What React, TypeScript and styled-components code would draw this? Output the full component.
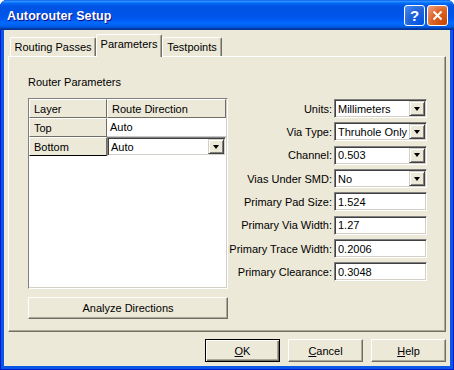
import React from "react"
import styled, { createGlobalStyle } from "styled-components"

const Color = {
  face: "#ECE9D8",
  light: "#FFFFFF",
  shadow: "#ACA899",
  dark: "#716F64",
  darkest: "#404040",
  frame: "#0A56E6",
}

const GlobalStyle = createGlobalStyle`
  html, body {
    margin: 0;
    padding: 0;
    background: #ffffff;
  }
  body {
    font-family: "Liberation Sans", Arial, sans-serif;
    font-size: 11px;
    color: #000;
  }
  * {
    box-sizing: border-box;
  }
`

let Window = styled.div`
  width: 454px;
  height: 370px;
  display: flex;
  flex-direction: column;
  background: ${Color.frame};
  box-shadow: inset 1px 0 #0019cf, inset -1px 0 #0019cf, inset 0 -1px #0019cf;
  border-radius: 7px 7px 0 0;
  overflow: hidden;
`

let TitleBar = styled.div`
  height: 30px;
  flex: none;
  display: flex;
  align-items: center;
  padding: 0 6px 0 7px;
  background: linear-gradient(
    to bottom,
    #0058ee 0%,
    #3593ff 4%,
    #288eff 6%,
    #127dff 8%,
    #036ffc 10%,
    #0262ee 14%,
    #0057e5 20%,
    #0054e3 24%,
    #0055eb 56%,
    #005bf5 66%,
    #026afe 76%,
    #0062ef 86%,
    #0052d6 92%,
    #0040ab 94%,
    #003092 100%
  );
`

let TitleText = styled.span`
  flex: 1;
  color: #fff;
  font-family: "Liberation Sans", Arial, sans-serif;
  font-weight: bold;
  font-size: 12.5px;
  letter-spacing: 0.1px;
  text-shadow: 1px 1px #0f1089;
  margin-top: 1px;
`

let CaptionButton = styled.div<{ $kind: "help" | "close" }>`
  width: 21px;
  height: 21px;
  margin-left: 2px;
  border: 1px solid #fff;
  border-radius: 3px;
  display: flex;
  align-items: center;
  justify-content: center;
  color: #fff;
  font-family: "Liberation Sans", Arial, sans-serif;
  font-weight: bold;
  font-size: 15px;
  background: ${(p) =>
    p.$kind === "help"
      ? "radial-gradient(circle at 90% 90%, #0054e9 0%, #2263d5 55%, #4d8ff9 100%)"
      : "radial-gradient(circle at 90% 90%, #cc4600 0%, #dc6527 55%, #f1a58a 100%)"};
`

let ClientArea = styled.div`
  flex: 1;
  margin: 0 4px 4px 4px;
  background: ${Color.face};
  padding: 4px;
  display: flex;
  flex-direction: column;
`

let TabStrip = styled.div`
  height: 22px;
  flex: none;
  display: flex;
  align-items: flex-end;
  padding-left: 2px;
  position: relative;
  z-index: 1;
`

let Tab = styled.div<{ $selected?: boolean; $width: number }>`
  width: ${(p) => p.$width}px;
  height: ${(p) => (p.$selected ? 23 : 19)}px;
  margin-bottom: ${(p) => (p.$selected ? -1 : 0)}px;
  background: ${Color.face};
  border-top: 1px solid ${Color.light};
  border-left: 1px solid ${Color.light};
  border-right: 1px solid ${Color.dark};
  box-shadow: inset -1px 0 ${Color.shadow};
  border-radius: 2px 2px 0 0;
  display: flex;
  justify-content: center;
  padding-top: 3px;
  white-space: nowrap;
`

let Panel = styled.div`
  height: 276px;
  flex: none;
  border: 1px solid;
  border-color: ${Color.light} ${Color.dark} ${Color.dark} ${Color.light};
  box-shadow: inset -1px -1px ${Color.shadow};
  padding: 18px 18px 0 19px;
  display: flex;
  flex-direction: column;
`

let GroupLabel = styled.div`
  height: 14px;
  line-height: 14px;
  margin-bottom: 9px;
`

let Columns = styled.div`
  display: flex;
`

let LeftColumn = styled.div`
  width: 200px;
  display: flex;
  flex-direction: column;
`

let RightColumn = styled.div`
  flex: 1;
  padding-top: 1px;
  display: flex;
  flex-direction: column;
  gap: 4.35px;
`

let Sunken = `
  border: 1px solid;
  border-color: #808080 #ffffff #ffffff #808080;
  box-shadow: inset 1px 1px ${Color.darkest}, inset -1px -1px #d4d0c8;
`

let Grid = styled.div`
  height: 191px;
  background: #fff;
  border: 1px solid;
  border-color: #808080 #ffffff #ffffff #808080;
  box-shadow: inset -1px -1px #d4d0c8;
  padding: 0 1px 1px 0;
  display: grid;
  grid-template-columns: 78px 1fr;
  grid-auto-rows: 19px;
  align-content: start;
`

let HeaderCell = styled.div<{ $strong?: boolean }>`
  background: ${Color.face};
  border-top: 1px solid ${Color.light};
  border-left: 1px solid ${Color.light};
  border-right: 1px solid ${Color.dark};
  border-bottom: 1px solid ${(p) => (p.$strong ? "#000" : Color.dark)};
  padding-left: 4px;
  display: flex;
  align-items: center;
  white-space: nowrap;
`

let DataCell = styled.div`
  background: #fff;
  border-bottom: 1px solid #c8c8c8;
  padding-left: 3px;
  display: flex;
  align-items: center;
`

let Field = styled.div<{ $width?: number }>`
  width: ${(p) => (p.$width ? `${p.$width}px` : "100%")};
  height: 19px;
  background: #fff;
  ${Sunken}
  padding-left: 3px;
  display: flex;
  align-items: center;
  white-space: nowrap;
  overflow: hidden;
`

let FieldText = styled.span`
  flex: 1;
`

let ArrowButton = styled.div`
  width: 16px;
  height: 15px;
  margin-right: 1px;
  flex: none;
  background: ${Color.face};
  border: 1px solid;
  border-color: #d4d0c8 ${Color.darkest} ${Color.darkest} #d4d0c8;
  box-shadow: inset 1px 1px #fff, inset -1px -1px #808080;
  display: flex;
  align-items: center;
  justify-content: center;

  &::after {
    content: "";
    width: 0;
    height: 0;
    border-left: 3.5px solid transparent;
    border-right: 3.5px solid transparent;
    border-top: 4px solid #000;
  }
`

let FormRow = styled.div`
  height: 19px;
  display: flex;
  align-items: center;
  justify-content: flex-end;
`

let FormLabel = styled.span`
  padding-right: 2px;
  white-space: nowrap;
`

let Button = styled.div<{ $default?: boolean; $width?: number }>`
  width: ${(p) => (p.$width ? `${p.$width}px` : "75px")};
  height: 23px;
  background: ${Color.face};
  border: 1px solid;
  border-color: ${(p) =>
    p.$default ? "#000" : `${Color.light} ${Color.dark} ${Color.dark} ${Color.light}`};
  box-shadow: ${(p) =>
    p.$default
      ? `inset 1px 1px ${Color.light}, inset -1px -1px ${Color.dark}, inset -2px -2px ${Color.shadow}`
      : `inset -1px -1px ${Color.shadow}`};
  display: flex;
  align-items: center;
  justify-content: center;
  white-space: nowrap;

  u {
    text-decoration: underline;
    text-underline-offset: 1px;
  }
`

let AnalyzeButton = styled(Button)`
  height: 22px;
  margin-top: 8px;
`

let Footer = styled.div`
  margin-top: 7px;
  display: flex;
  justify-content: flex-end;
  gap: 8px;
`

function CloseIcon() {
  return (
    <svg width="11" height="11" viewBox="0 0 11 11">
      <path d="M1.5 1.5 L9.5 9.5 M9.5 1.5 L1.5 9.5" stroke="#fff" strokeWidth="2" />
    </svg>
  )
}

function ComboBox(props: { value: string; width?: number }) {
  return (
    <Field $width={props.width}>
      <FieldText>{props.value}</FieldText>
      <ArrowButton />
    </Field>
  )
}

type Param = { label: string; value: string; combo?: boolean }

const params: Param[] = [
  { label: "Units:", value: "Millimeters", combo: true },
  { label: "Via Type:", value: "Thruhole Only", combo: true },
  { label: "Channel:", value: "0.503", combo: true },
  { label: "Vias Under SMD:", value: "No", combo: true },
  { label: "Primary Pad Size:", value: "1.524" },
  { label: "Primary Via Width:", value: "1.27" },
  { label: "Primary Trace Width:", value: "0.2006" },
  { label: "Primary Clearance:", value: "0.3048" },
]

export default function App() {
  return (
    <>
      <GlobalStyle />
      <Window>
        <TitleBar>
          <TitleText>Autorouter Setup</TitleText>
          <CaptionButton $kind="help">?</CaptionButton>
          <CaptionButton $kind="close">
            <CloseIcon />
          </CaptionButton>
        </TitleBar>
        <ClientArea>
          <TabStrip>
            <Tab $width={86}>Routing Passes</Tab>
            <Tab $width={66} $selected>
              Parameters
            </Tab>
            <Tab $width={60}>Testpoints</Tab>
          </TabStrip>
          <Panel>
            <GroupLabel>Router Parameters</GroupLabel>
            <Columns>
              <LeftColumn>
                <Grid>
                  <HeaderCell>Layer</HeaderCell>
                  <HeaderCell>Route Direction</HeaderCell>
                  <HeaderCell>Top</HeaderCell>
                  <DataCell>Auto</DataCell>
                  <HeaderCell $strong>Bottom</HeaderCell>
                  <ComboBox value="Auto" />
                </Grid>
                <AnalyzeButton $width={200}>Analyze Directions</AnalyzeButton>
              </LeftColumn>
              <RightColumn>
                {params.map((p) => (
                  <FormRow key={p.label}>
                    <FormLabel>{p.label}</FormLabel>
                    {p.combo ? (
                      <ComboBox value={p.value} width={93} />
                    ) : (
                      <Field $width={93}>{p.value}</Field>
                    )}
                  </FormRow>
                ))}
              </RightColumn>
            </Columns>
          </Panel>
          <Footer>
            <Button $default>
              <u>O</u>K
            </Button>
            <Button>
              <u>C</u>ancel
            </Button>
            <Button>
              <u>H</u>elp
            </Button>
          </Footer>
        </ClientArea>
      </Window>
    </>
  )
}
